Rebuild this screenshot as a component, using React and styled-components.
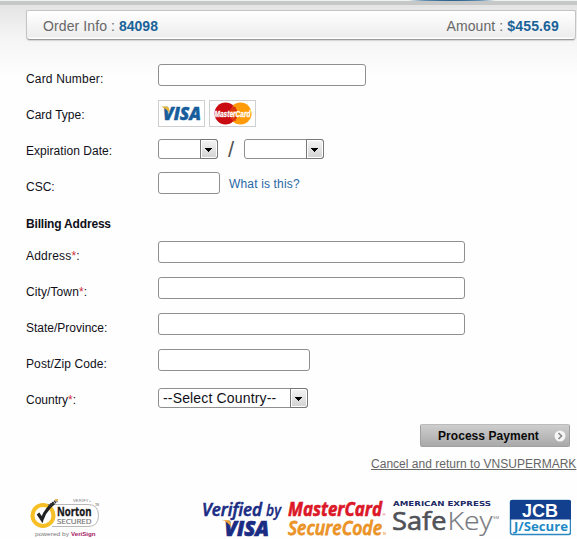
import React from "react";
import styled, { createGlobalStyle } from "styled-components";

const Global = createGlobalStyle`
  * { box-sizing: border-box; }
  body {
    margin: 0;
    background: #fefefe;
    font-family: "Liberation Sans", Arial, sans-serif;
    font-size: 12px;
    color: #101018;
    overflow: hidden;
  }
`;

const Page = styled.div`
  width: 577px;
  height: 539px;
  overflow: hidden;
  display: flex;
  flex-direction: column;
  background: linear-gradient(#e4e4e4 5px, #f4f4f4 36px, #fefefe 78px);
`;

const TopBar = styled.div`
  flex: none;
  height: 5px;
  background:
    radial-gradient(ellipse 50px 3px at 452px -1px, #17517f 40%, #6a94b4 75%, transparent) no-repeat 0 0 / 577px 1px,
    linear-gradient(#f0f2f2 1px, #c6c8c7 1px);
`;

const Summary = styled.header`
  flex: none;
  display: flex;
  justify-content: space-between;
  align-items: center;
  width: 550px;
  height: 30px;
  margin: 5px 0 0 26px;
  padding: 2px 16px 0;
  border: 1px solid #c4c4c4;
  border-bottom-color: #999;
  border-radius: 2px 2px 4px 4px;
  background: linear-gradient(#ffffff, #ededed 26px, #fff 27px);
  box-shadow: 0 1px 1px #d4d4d4;
  font-size: 14px;
  color: #686868;
`;

const SummaryItem = styled.div`
  letter-spacing: ${(p) => p.$spacing || 0}px;
  b { color: #1a6399; letter-spacing: ${(p) => p.$value || 0}px; }
`;

const Form = styled.form`
  flex: none;
  display: flex;
  flex-direction: column;
  margin-top: 21px;
  padding-left: 26px;
`;

const Row = styled.div`
  display: grid;
  grid-template-columns: 132px 1fr;
  height: 36px;
`;

const Label = styled.label`
  line-height: 36px;
  letter-spacing: ${(p) => p.$spacing || 0}px;
`;

const Required = styled.span`
  color: #d02e3c;
`;

const Controls = styled.div`
  display: flex;
  align-items: flex-start;
  padding-top: ${(p) => p.$top || 3}px;
`;

const Heading = styled.h2`
  margin: 0;
  height: 33px;
  font-size: 12px;
  line-height: 38px;
  letter-spacing: -0.18px;
`;

const TextInput = styled.input`
  width: ${(p) => p.$width}px;
  height: 22px;
  border: 1px solid #8f8f8f;
  border-radius: 3px;
  background: #fff;
  outline: none;
`;

const SelectBox = styled.div`
  display: flex;
  justify-content: space-between;
  width: ${(p) => p.$width}px;
  height: 20px;
  border: 1px solid #8f8f8f;
  border-radius: 3px;
  background: #fff;
  font-size: 14px;
  letter-spacing: 0.16px;
  line-height: 19px;
  padding-left: 4px;
  white-space: nowrap;
`;

const SelectButton = styled.span`
  display: flex;
  align-items: center;
  justify-content: center;
  flex: none;
  width: 18px;
  height: 20px;
  padding-top: 2px;
  margin: -1px -1px 0 0;
  border: 1px solid #777;
  border-radius: 0 3px 3px 0;
  background: linear-gradient(#f4f4f4, #d2d2d2);
  box-shadow: inset 0 0 0 1px #fff;
`;

const Slash = styled.span`
  width: 32px;
  padding-left: 6px;
  font-size: 22px;
  line-height: 22px;
  margin-left: 4px;
  margin-right: -10px;
  color: #555;
`;

const HelpLink = styled.a`
  margin: 5px 0 0 9px;
  line-height: 14px;
  letter-spacing: 0.16px;
  color: #2a67a5;
`;

const CardTile = styled.span`
  width: 47px;
  height: 27px;
  margin-right: 4px;
  border: 1px solid #cfcfcf;
  background: #fff;
  svg { display: block; }
`;

const Actions = styled.div`
  flex: none;
  display: flex;
  flex-direction: column;
  align-items: flex-end;
  margin-top: 6px;
`;

const PayButton = styled.button`
  display: flex;
  align-items: center;
  justify-content: space-between;
  width: 150px;
  height: 23px;
  margin-right: 7px;
  padding: 0 5px 0 17px;
  border: 1px solid #a0a0a0;
  border-top-color: #bbb;
  border-radius: 2px;
  background: linear-gradient(#cecece, #a9a9a9);
  font: bold 12px "Liberation Sans", Arial, sans-serif;
  letter-spacing: 0.05px;
  color: #0a0a0a;
  svg { flex: none; margin-right: -2px; }
`;

const CancelLink = styled.a`
  width: 206px;
  margin-top: 10px;
  line-height: 15px;
  letter-spacing: 0.02px;
  white-space: nowrap;
  text-decoration: underline;
  color: #666;
`;

const Footer = styled.footer`
  flex: none;
  display: flex;
  margin-top: 23px;
  height: 44px;
  padding-left: 28px;
  svg { flex: none; display: block; }
`;

const Gap = styled.span`
  flex: none;
  width: ${(p) => p.$width}px;
`;

const Arrow = () => (
  <SelectButton>
    <svg width="8" height="5" viewBox="0 0 8 5" shapeRendering="crispEdges">
      <path d="M0 0H7V1H6V2H5V3H4V4H3V3H2V2H1V1H0Z" fill="#000" />
    </svg>
  </SelectButton>
);

const Select = ({ width, children }) => (
  <SelectBox $width={width}>
    <span>{children}</span>
    <Arrow />
  </SelectBox>
);

const Field = ({ label, required, spacing, top, children }) => (
  <Row>
    <Label $spacing={spacing}>
      {label}
      {required && <Required>*</Required>}:
    </Label>
    <Controls $top={top}>{children}</Controls>
  </Row>
);

const VisaCard = () => (
  <svg width="45" height="25" viewBox="0 0 45 25">
    <text x="4" y="19" textLength="38" lengthAdjust="spacingAndGlyphs" fontFamily="Open Sans" fontWeight="800" fontStyle="italic" fontSize="18" fill="#185d9b" stroke="#185d9b" strokeWidth=".5">VISA</text>
    <path d="M2.500 5.500H8.500Q10.300 6 10.300 9L10.600 12.500Q8 7.500 2.500 6Z" fill="#e9b53c" />
  </svg>
);

const MasterCard = () => (
  <svg width="45" height="25" viewBox="0 0 45 25">
    <circle cx="30.500" cy="12.500" r="11" fill="#ff9a08" />
    <circle cx="15.500" cy="12.500" r="11" fill="#ca0c12" />
    <path d="M23 4.700a11 11 0 0 1 0 15.600a11 11 0 0 1 0-15.600" fill="#ec6413" />
    <path d="M20 7h6M19 9h8M19 17h8M20 19h6" stroke="#ca0c12" />
    <text x="4.500" y="16" textLength="36" lengthAdjust="spacingAndGlyphs" fontFamily="Liberation Sans" fontWeight="bold" fontStyle="italic" fontSize="9" fill="#fff" stroke="#fff" strokeWidth=".3">MasterCard</text>
  </svg>
);

const Norton = () => (
  <svg width="74" height="44" viewBox="28 495 74 44">
    <path d="M52 504.500H88Q98.500 504.500 98.500 515.500T88 526.500H52" fill="#fff" stroke="#b8b8b8" />
    <circle cx="43" cy="515.500" r="10.500" fill="#fff" stroke="#f6bf25" strokeWidth="4" />
    <path d="M38 513.500L42 519.500Q45 510 54 503" fill="none" stroke="#222" strokeWidth="3.200" />
    <path d="M49 506L57 500.500" stroke="#333" strokeWidth="3" strokeDasharray="1.500 .7" />
    <path d="M55 500.500L58 499.500" stroke="#e6b039" strokeWidth="1.500" />
    <text x="73" y="501.500" textLength="18" fontFamily="Liberation Sans" fontSize="4" fill="#777">VERIFY+</text>
    <text x="95" y="506" textLength="4" fontFamily="Liberation Sans" fontSize="3" fill="#666">TM</text>
    <text x="57" y="515.500" textLength="34.500" lengthAdjust="spacingAndGlyphs" fontFamily="Open Sans" fontWeight="bold" fontSize="12" fill="#181818" stroke="#181818" strokeWidth=".3">Norton</text>
    <text x="57" y="523.500" textLength="34.500" lengthAdjust="spacingAndGlyphs" fontFamily="Open Sans" fontSize="8" fill="#777" stroke="#777" strokeWidth=".2">SECURED</text>
    <text x="35" y="535.500" textLength="34" lengthAdjust="spacingAndGlyphs" fontFamily="Liberation Sans" fontSize="6" fill="#777">powered by</text>
    <text x="71" y="535.500" textLength="24.500" lengthAdjust="spacingAndGlyphs" fontFamily="Liberation Sans" fontWeight="bold" fontSize="6" fill="#a3165f">VeriSign</text>
  </svg>
);

const VerifiedByVisa = () => (
  <svg width="84" height="44" viewBox="200 495 84 44">
    <text x="202" y="515.500" textLength="60" lengthAdjust="spacingAndGlyphs" fontFamily="Open Sans" fontWeight="600" fontStyle="italic" fontSize="18" fill="#1a2c83" stroke="#1a2c83" strokeWidth=".6">Verified</text>
    <text x="266" y="515.500" textLength="15" lengthAdjust="spacingAndGlyphs" fontFamily="Open Sans" fontWeight="600" fontStyle="italic" fontSize="15.500" fill="#1a2c83" stroke="#1a2c83" strokeWidth=".3">by</text>
    <text x="224.500" y="535.500" textLength="44.500" lengthAdjust="spacingAndGlyphs" fontFamily="Open Sans" fontWeight="800" fontStyle="italic" fontSize="20.500" fill="#1a2c83" stroke="#1a2c83" strokeWidth=".7">VISA</text>
    <path d="M222 520.300H228.500Q231 521 231 527Q227.500 521.500 222 520.300Z" fill="#f0a334" />
  </svg>
);

const SecureCode = () => (
  <svg width="100" height="44" viewBox="286 495 100 44">
    <text x="288" y="515.500" textLength="94" lengthAdjust="spacingAndGlyphs" fontFamily="Open Sans" fontWeight="bold" fontStyle="italic" fontSize="19.500" fill="#dc1828" stroke="#dc1828" strokeWidth=".6">MasterCard</text>
    <text x="382.500" y="515.500" textLength="3" fontFamily="Liberation Sans" fontSize="4" fill="#dc1828">®</text>
    <text x="288" y="535" textLength="94" lengthAdjust="spacingAndGlyphs" fontFamily="Open Sans" fontWeight="600" fontStyle="italic" fontSize="19.500" fill="#eb9326" stroke="#eb9326" strokeWidth=".8">SecureCode</text>
    <text x="382.500" y="534.500" textLength="3.500" fontFamily="Liberation Sans" fontSize="3" fill="#eb9326">TM</text>
  </svg>
);

const SafeKey = () => (
  <svg width="112" height="44" viewBox="390 495 112 44">
    <text x="393" y="505.500" textLength="98" lengthAdjust="spacingAndGlyphs" fontFamily="DejaVu Sans" fontWeight="bold" fontSize="6.800" fill="#202a66">AMERICAN EXPRESS</text>
    <text x="392" y="529.500" textLength="54.500" lengthAdjust="spacingAndGlyphs" fontFamily="Open Sans" fontSize="25" fill="#505258" stroke="#505258" strokeWidth=".6">Safe</text>
    <text x="447.500" y="529.500" textLength="45" lengthAdjust="spacingAndGlyphs" fontFamily="Open Sans" fontWeight="300" fontSize="25" fill="#777980" stroke="#777980" strokeWidth=".2">Key</text>
    <text x="493" y="519" textLength="6" fontFamily="Liberation Sans" fontSize="4" fill="#777">SM</text>
  </svg>
);

const Jcb = () => (
  <svg width="62" height="44" viewBox="509 495 62 44">
    <rect x="510.500" y="500.500" width="60" height="34" rx="2" fill="#fff" stroke="#2c86c2" strokeWidth="1.500" />
    <path d="M510 519.500V502Q510 500 512 500H569Q571 500 571 502V519.500Z" fill="#123f8e" />
    <text x="522" y="517" textLength="36" lengthAdjust="spacingAndGlyphs" fontFamily="Liberation Sans" fontWeight="bold" fontSize="19" fill="#fff">JCB</text>
    <text x="514" y="531" textLength="54" lengthAdjust="spacingAndGlyphs" fontFamily="Open Sans" fontWeight="bold" fontSize="12" fill="#1d8ac6">J/Secure</text>
  </svg>
);

export default function App() {
  return (
    <Page>
      <Global />
      <TopBar />
      <Summary>
        <SummaryItem $spacing={0.1}>Order Info : <b>84098</b></SummaryItem>
        <SummaryItem $spacing={0.1} $value={0.15}>Amount : <b>$455.69</b></SummaryItem>
      </Summary>
      <Form>
        <Field label="Card Number" spacing={0.17}><TextInput $width={208} /></Field>
        <Field label="Card Type">
          <CardTile><VisaCard /></CardTile>
          <CardTile><MasterCard /></CardTile>
        </Field>
        <Field label="Expiration Date" top={6} spacing={0.05}>
          <Select width={60} />
          <Slash>/</Slash>
          <Select width={80} />
        </Field>
        <Field label="CSC">
          <TextInput $width={62} />
          <HelpLink>What is this?</HelpLink>
        </Field>
        <Heading>Billing Address</Heading>
        <Field label="Address" required spacing={0.2}><TextInput $width={307} /></Field>
        <Field label="City/Town" required spacing={0.1}><TextInput $width={307} /></Field>
        <Field label="State/Province"><TextInput $width={307} /></Field>
        <Field label="Post/Zip Code" spacing={0.12}><TextInput $width={152} /></Field>
        <Field label="Country" required top={6}>
          <Select width={150}>--Select Country--</Select>
        </Field>
      </Form>
      <Actions>
        <PayButton type="button">
          Process Payment
          <svg width="12" height="12" viewBox="0 0 12 12">
            <circle cx="6" cy="6" r="5.500" fill="#f5f5f5" />
            <path d="M4.500 3L7.500 6L4.500 9" fill="none" stroke="#888" strokeWidth="1.600" />
          </svg>
        </PayButton>
        <CancelLink>Cancel and return to VNSUPERMARK</CancelLink>
      </Actions>
      <Footer>
        <Norton />
        <Gap $width={98} />
        <VerifiedByVisa />
        <Gap $width={2} />
        <SecureCode />
        <Gap $width={4} />
        <SafeKey />
        <Gap $width={7} />
        <Jcb />
      </Footer>
    </Page>
  );
}
